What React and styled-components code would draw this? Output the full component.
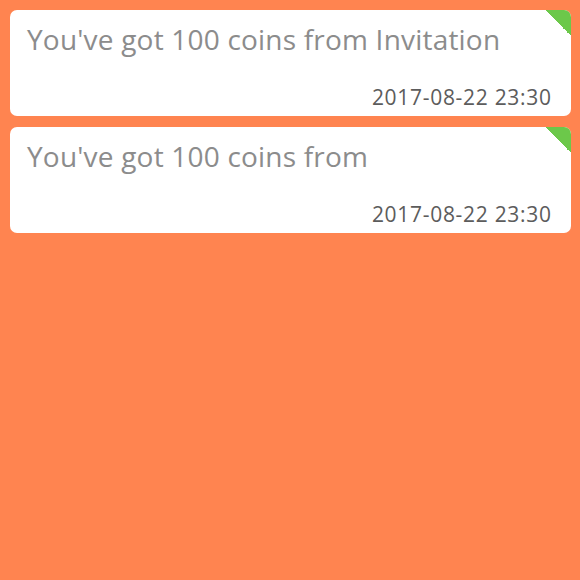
import styled, { createGlobalStyle } from "styled-components";

const GlobalStyle = createGlobalStyle`
  html, body {
    margin: 0;
    padding: 0;
    background: #ff8450;
  }
  body {
    font-family: "Open Sans", "DejaVu Sans", sans-serif;
  }
`;

const notices = [
  { text: "You've got 100 coins from Invitation", time: "2017-08-22 23:30" },
  { text: "You've got 100 coins from", time: "2017-08-22 23:30" },
];

function App() {
  return (
    <>
      <GlobalStyle />
      <Page>
        {notices.map((notice, idx) => (
          <Card key={`notice-${idx}`}>
            <Corner />
            <Title>{notice.text}</Title>
            <Time>{notice.time}</Time>
          </Card>
        ))}
      </Page>
    </>
  );
}

const Page = styled.main`
  min-height: 580px;
  box-sizing: border-box;
  padding: 10px 9px 10px 10px;
  display: flex;
  flex-direction: column;
  gap: 11px;
  background: #ff8450;
`;

const Card = styled.section`
  position: relative;
  height: 106px;
  box-sizing: border-box;
  padding: 9px 20px 0 17px;
  background: #fff;
  border-radius: 7px;
  overflow: hidden;
  display: flex;
  flex-direction: column;
`;

const Corner = styled.div`
  position: absolute;
  top: 0;
  right: 0;
  width: 26px;
  height: 26px;
  background: linear-gradient(45deg, transparent 50%, #6cc84a 50%);
`;

const Title = styled.div`
  font-size: 28px;
  line-height: 40px;
  letter-spacing: 0.2px;
  color: #8c8c8c;
  white-space: nowrap;
`;

const Time = styled.div`
  margin-top: auto;
  margin-bottom: 5px;
  align-self: flex-end;
  font-size: 21px;
  line-height: 28px;
  letter-spacing: 0.7px;
  margin-right: -0.7px;
  color: #5c5c5c;
`;

export default App;
